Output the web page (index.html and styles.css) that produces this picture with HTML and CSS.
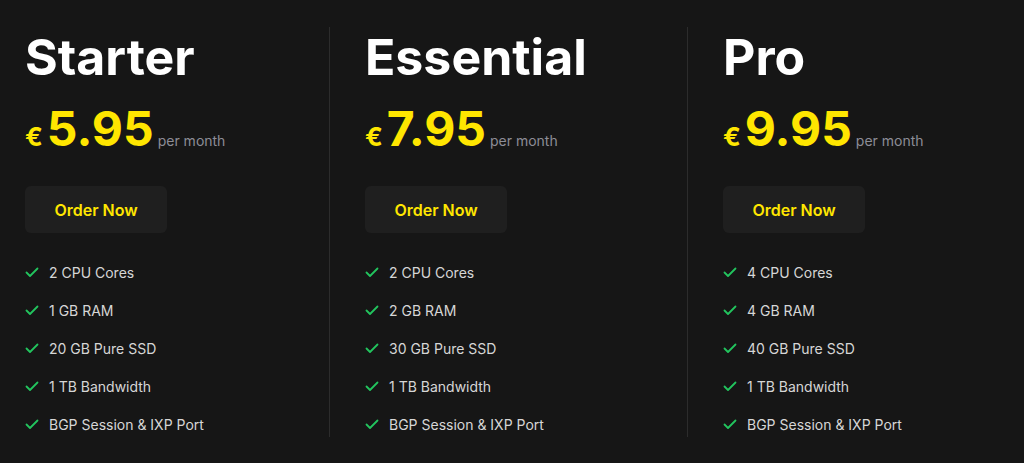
FILE: index.html
```html
<!DOCTYPE html>
<html lang="en">
<head>
<meta charset="utf-8">
<title>Pricing</title>
<link rel="stylesheet" href="styles.css">
</head>
<body>
<div class="plans">
  <section class="plan">
    <h2 class="plan-name">Starter</h2>
    <div class="price"><span class="cur">€</span><span class="amount">5.95</span><span class="period">per month</span></div>
    <a class="order" href="#">Order Now</a>
    <ul class="features">
      <li><svg class="check" viewBox="0 0 14 14"><path d="M1.5 7.5 L5 11 L12.5 3.5"/></svg>2 CPU Cores</li>
      <li><svg class="check" viewBox="0 0 14 14"><path d="M1.5 7.5 L5 11 L12.5 3.5"/></svg>1 GB RAM</li>
      <li><svg class="check" viewBox="0 0 14 14"><path d="M1.5 7.5 L5 11 L12.5 3.5"/></svg>20 GB Pure SSD</li>
      <li><svg class="check" viewBox="0 0 14 14"><path d="M1.5 7.5 L5 11 L12.5 3.5"/></svg>1 TB Bandwidth</li>
      <li><svg class="check" viewBox="0 0 14 14"><path d="M1.5 7.5 L5 11 L12.5 3.5"/></svg>BGP Session &amp; IXP Port</li>
    </ul>
  </section>
  <section class="plan">
    <h2 class="plan-name">Essential</h2>
    <div class="price"><span class="cur">€</span><span class="amount">7.95</span><span class="period">per month</span></div>
    <a class="order" href="#">Order Now</a>
    <ul class="features">
      <li><svg class="check" viewBox="0 0 14 14"><path d="M1.5 7.5 L5 11 L12.5 3.5"/></svg>2 CPU Cores</li>
      <li><svg class="check" viewBox="0 0 14 14"><path d="M1.5 7.5 L5 11 L12.5 3.5"/></svg>2 GB RAM</li>
      <li><svg class="check" viewBox="0 0 14 14"><path d="M1.5 7.5 L5 11 L12.5 3.5"/></svg>30 GB Pure SSD</li>
      <li><svg class="check" viewBox="0 0 14 14"><path d="M1.5 7.5 L5 11 L12.5 3.5"/></svg>1 TB Bandwidth</li>
      <li><svg class="check" viewBox="0 0 14 14"><path d="M1.5 7.5 L5 11 L12.5 3.5"/></svg>BGP Session &amp; IXP Port</li>
    </ul>
  </section>
  <section class="plan">
    <h2 class="plan-name">Pro</h2>
    <div class="price"><span class="cur">€</span><span class="amount">9.95</span><span class="period">per month</span></div>
    <a class="order" href="#">Order Now</a>
    <ul class="features">
      <li><svg class="check" viewBox="0 0 14 14"><path d="M1.5 7.5 L5 11 L12.5 3.5"/></svg>4 CPU Cores</li>
      <li><svg class="check" viewBox="0 0 14 14"><path d="M1.5 7.5 L5 11 L12.5 3.5"/></svg>4 GB RAM</li>
      <li><svg class="check" viewBox="0 0 14 14"><path d="M1.5 7.5 L5 11 L12.5 3.5"/></svg>40 GB Pure SSD</li>
      <li><svg class="check" viewBox="0 0 14 14"><path d="M1.5 7.5 L5 11 L12.5 3.5"/></svg>1 TB Bandwidth</li>
      <li><svg class="check" viewBox="0 0 14 14"><path d="M1.5 7.5 L5 11 L12.5 3.5"/></svg>BGP Session &amp; IXP Port</li>
    </ul>
  </section>
</div>
</body>
</html>
```

FILE: styles.css
```css
html, body {
  margin: 0;
  padding: 0;
  background: #161616;
  height: 100%;
}
body {
  font-family: Inter, "Noto Sans", "Liberation Sans", sans-serif;
  color: #ffffff;
  overflow: hidden;
}
.plans {
  display: flex;
  padding: 27px 0 0 25px;
}
.plan {
  flex-shrink: 0;
  display: flex;
  flex-direction: column;
  align-items: flex-start;
  padding-bottom: 3px;
}
.plan:first-child {
  width: 304px;
}
.plan + .plan {
  border-left: 1px solid #2c2c2c;
  padding-left: 35px;
  width: 322px;
}
.plan-name {
  margin: 0;
  font-size: 50px;
  font-weight: 700;
  line-height: normal;
  color: #ffffff;
}
.price {
  display: flex;
  align-items: baseline;
  margin-top: 12px;
  line-height: normal;
}
.cur {
  font-size: 26px;
  font-weight: 700;
  color: #ffe600;
  margin-right: 4px;
}
.amount {
  font-size: 48px;
  font-weight: 700;
  color: #ffe600;
}
.period {
  font-size: 14px;
  color: #8d8d96;
  margin-left: 4px;
}
.order {
  margin-top: 28px;
  width: 142px;
  height: 47px;
  display: flex;
  align-items: center;
  justify-content: center;
  background: #1f1f1f;
  border-radius: 6px;
  color: #ffe600;
  font-size: 16px;
  font-weight: 600;
  text-decoration: none;
}
.features {
  list-style: none;
  margin: 29px 0 0;
  padding: 0;
  display: flex;
  flex-direction: column;
  gap: 18px;
}
.features li {
  display: flex;
  align-items: center;
  height: 20px;
  font-size: 14px;
  color: #d6d6d6;
}
.check {
  width: 14px;
  height: 14px;
  margin-right: 10px;
  fill: none;
  stroke: #22c55e;
  stroke-width: 1.8;
  stroke-linecap: round;
  stroke-linejoin: round;
}
```
